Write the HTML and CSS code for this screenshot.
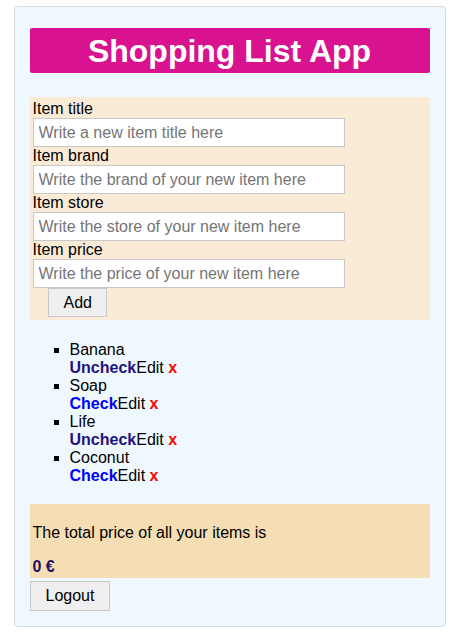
FILE: index.html
```html
<!DOCTYPE html>
<html>
<head>
<meta charset="utf-8">
<title>Shopping List App</title>
<link rel="stylesheet" href="styles.css">
</head>
<body>
<div class="app">
  <h1 class="title">Shopping List App</h1>
  <form class="form">
    <label class="label">Item title</label>
    <input class="field" type="text" placeholder="Write a new item title here">
    <label class="label">Item brand</label>
    <input class="field" type="text" placeholder="Write the brand of your new item here">
    <label class="label">Item store</label>
    <input class="field" type="text" placeholder="Write the store of your new item here">
    <label class="label">Item price</label>
    <input class="field" type="text" placeholder="Write the price of your new item here">
    <button class="btn btn-add" type="button">Add</button>
  </form>
  <ul class="list">
    <li>Banana<br><span class="uncheck">Uncheck</span><span class="edit">Edit</span> <span class="del">x</span></li>
    <li>Soap<br><span class="check">Check</span><span class="edit">Edit</span> <span class="del">x</span></li>
    <li>Life<br><span class="uncheck">Uncheck</span><span class="edit">Edit</span> <span class="del">x</span></li>
    <li>Coconut<br><span class="check">Check</span><span class="edit">Edit</span> <span class="del">x</span></li>
  </ul>
  <div class="total">
    <p class="total-text">The total price of all your items is</p>
    <div class="total-value">0 €</div>
  </div>
  <button class="btn btn-logout" type="button">Logout</button>
</div>
</body>
</html>
```

FILE: styles.css
```css
html, body {
  margin: 0;
  padding: 0;
  background: #ffffff;
}
body {
  font-family: "Liberation Sans", Arial, sans-serif;
  font-size: 16px;
  color: #000;
}
.app {
  width: 400px;
  margin: 6px auto 0;
  padding: 15px;
  border: 1px solid #d6dbe0;
  border-radius: 4px;
  background: #f0f8ff;
}
.title {
  margin: 6px 0 24px;
  height: 45px;
  line-height: 46px;
  font-size: 32px;
  font-weight: bold;
  text-align: center;
  color: #fff;
  background: #d91390;
  border-radius: 2px;
}
.form {
  margin: 0;
  padding: 3px;
  background: #faebd7;
}
.label {
  display: block;
  line-height: 18px;
}
.field {
  display: block;
  box-sizing: border-box;
  width: 312px;
  height: 29px;
  margin: 0;
  padding: 0 5px;
  border: 1px solid #c8c8c8;
  border-radius: 0;
  background: #fff;
  font-family: "Liberation Sans", Arial, sans-serif;
  font-size: 16px;
  color: #000;
  outline: none;
}
.field::placeholder {
  color: #757575;
}
.btn {
  display: block;
  box-sizing: border-box;
  height: 29px;
  padding: 0 15px;
  border: 1px solid #c8c8c8;
  border-radius: 0;
  background: #efefef;
  font-family: "Liberation Sans", Arial, sans-serif;
  font-size: 16px;
  color: #000;
}
.btn-add {
  margin: 0 0 0 15px;
  width: 59px;
}
.list {
  margin: 21px 0 19px;
  padding-left: 40px;
  list-style: square;
  line-height: 18px;
}
.uncheck {
  font-weight: bold;
  color: #1f1282;
}
.check {
  font-weight: bold;
  color: #0000ff;
}
.del {
  font-weight: bold;
  color: #ff0000;
}
.total {
  padding: 4px 3px 2px;
  background: #f5deb3;
}
.total-text {
  margin: 16px 0;
  line-height: 18px;
}
.total-value {
  line-height: 18px;
  font-weight: bold;
  color: #1f1262;
}
.btn-logout {
  margin-top: 3px;
  width: 80px;
  height: 30px;
}
```
